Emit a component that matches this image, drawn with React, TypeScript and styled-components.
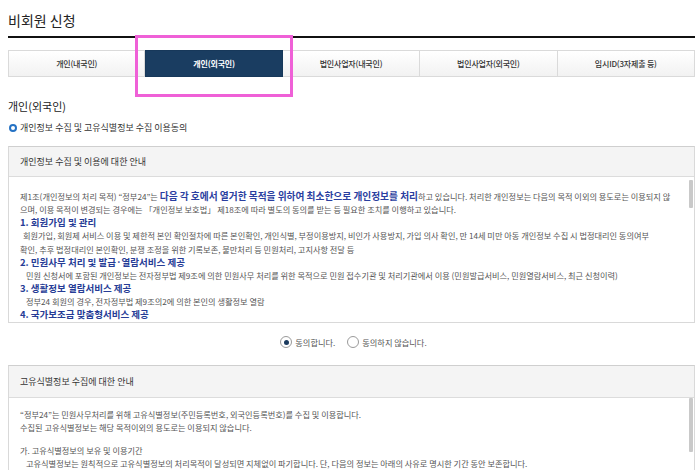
import React from "react";
import styled, { createGlobalStyle } from "styled-components";

const GlobalStyle = createGlobalStyle`
  html, body { margin: 0; padding: 0; background: #fff; }
  body { font-family: "Noto Sans CJK KR", "Noto Sans", sans-serif; overflow: hidden; }
`;

const Page = styled.div`
  position: relative;
  width: 687px;
  padding: 0 5px 0 8px;
  color: #333;
`;

const PageTitle = styled.h1`
  margin: 0;
  padding: 9px 0 5px;
  font-size: 14px;
  line-height: 22px;
  font-weight: 400;
  color: #222;
  border-bottom: 2px solid #111;
`;

const TabList = styled.div`
  display: grid;
  grid-template-columns: repeat(5, 1fr);
  margin-top: 12px;
  height: 27px;
`;

const Tab = styled.div<{ $active?: boolean }>`
  display: flex;
  align-items: center;
  justify-content: center;
  font-size: 8px;
  letter-spacing: -0.2px;
  border: 1px solid ${(p) => (p.$active ? "#17385a" : "#dadada")};
  border-left-width: ${(p) => (p.$active ? "1px" : "0")};
  background: ${(p) =>
    p.$active ? "#1a3d61" : "linear-gradient(#ffffff, #f2f2f2)"};
  color: ${(p) => (p.$active ? "#fff" : "#333")};
  font-weight: ${(p) => (p.$active ? 700 : 500)};
  &:first-child { border-left-width: 1px; }
`;

const SectionTitle = styled.h2`
  margin: 21px 0 0;
  font-size: 11px;
  line-height: 16px;
  font-weight: 400;
  color: #222;
`;

const AgreeTitle = styled.div`
  display: flex;
  align-items: center;
  gap: 3px;
  margin-top: 7px;
  font-size: 9px;
  line-height: 14px;
  color: #333;
`;

const RingIcon = styled.span`
  display: inline-block;
  box-sizing: border-box;
  width: 8px;
  height: 8px;
  border: 2px solid #2572c4;
  border-radius: 50%;
  margin-left: 1px;
`;

const InfoBox = styled.div<{ $gap: number }>`
  margin-top: ${(p) => p.$gap}px;
  border: 1px solid #d9d9d9;
  border-top-color: #cfcfcf;
`;

const InfoHead = styled.div<{ $h: number }>`
  display: flex;
  align-items: center;
  height: ${(p) => p.$h}px;
  padding-left: 11px;
  background: #f4f4f4;
  border-bottom: 1px solid #dcdcdc;
  font-size: 9px;
  color: #333;
`;

const InfoBody = styled.div<{ $h: number; $pt: number; $lh: number }>`
  position: relative;
  height: ${(p) => p.$h}px;
  box-sizing: border-box;
  padding: ${(p) => p.$pt}px 14px 0 11px;
  overflow: hidden;
  font-size: 8.2px;
  line-height: ${(p) => p.$lh}px;
  color: #555;
`;

const Line = styled.div<{ $indent?: number }>`
  white-space: nowrap;
  padding-left: ${(p) => p.$indent ?? 0}px;
`;

const Blank = styled.div`
  height: 10px;
`;

const Emph = styled.span`
  font-size: 9.7px;
  font-weight: 700;
  color: #2a3ea0;
`;

const ItemHead = styled.div`
  white-space: nowrap;
  font-size: 9.5px;
  font-weight: 700;
  color: #263c96;
`;

const ScrollThumb = styled.div<{ $top: number; $h: number }>`
  position: absolute;
  right: 1px;
  top: ${(p) => p.$top}px;
  width: 4px;
  height: ${(p) => p.$h}px;
  background: #c9c9c9;
  border-radius: 1px;
`;

const RadioRow = styled.div`
  display: flex;
  justify-content: center;
  align-items: center;
  gap: 12px;
  height: 38px;
  padding-left: 4px;
  font-size: 8.2px;
  color: #555;
`;

const RadioLabel = styled.label`
  display: flex;
  align-items: center;
  gap: 3px;
`;

const RadioCircle = styled.span<{ $checked?: boolean }>`
  position: relative;
  box-sizing: border-box;
  width: 12px;
  height: 12px;
  border: 1px solid #9a9a9a;
  border-radius: 50%;
  background: #fff;
  &::after {
    content: "";
    display: ${(p) => (p.$checked ? "block" : "none")};
    position: absolute;
    left: 2.5px;
    top: 2.5px;
    width: 5px;
    height: 5px;
    border-radius: 50%;
    background: #1b3a5e;
  }
`;

const Highlight = styled.div`
  position: absolute;
  left: 135px;
  top: 35px;
  width: 158px;
  height: 62px;
  box-sizing: border-box;
  border: 3px solid #ef60d7;
  pointer-events: none;
`;

const tabs = ["개인(내국인)", "개인(외국인)", "법인사업자(내국인)", "법인사업자(외국인)", "임시ID(3자제출 등)"];

export default function App() {
  return (
    <>
      <GlobalStyle />
      <Page>
        <PageTitle>비회원 신청</PageTitle>
        <TabList>
          {tabs.map((t, i) => (
            <Tab key={t} $active={i === 1}>
              {t}
            </Tab>
          ))}
        </TabList>

        <SectionTitle>개인(외국인)</SectionTitle>
        <AgreeTitle>
          <RingIcon />
          개인정보 수집 및 고유식별정보 수집 이용동의
        </AgreeTitle>

        <InfoBox $gap={11}>
          <InfoHead $h={29}>개인정보 수집 및 이용에 대한 안내</InfoHead>
          <InfoBody $h={145} $pt={13} $lh={13.15}>
            <Line>
              제1조(개인정보의 처리 목적) “정부24”는{" "}
              <Emph>다음 각 호에서 열거한 목적을 위하여 최소한으로 개인정보를 처리</Emph>하고 있습니다. 처리한
              개인정보는 다음의 목적 이외의 용도로는 이용되지 않
            </Line>
            <Line>
              으며, 이용 목적이 변경되는 경우에는 「개인정보 보호법」 제18조에 따라 별도의 동의를 받는 등 필요한
              조치를 이행하고 있습니다.
            </Line>
            <ItemHead>1. 회원가입 및 관리</ItemHead>
            <Line $indent={3}>
              회원가입, 회원제 서비스 이용 및 제한적 본인 확인절차에 따른 본인확인, 개인식별, 부정이용방지, 비인가
              사용방지, 가입 의사 확인, 만 14세 미만 아동 개인정보 수집 시 법정대리인 동의여부
            </Line>
            <Line>
              확인, 추후 법정대리인 본인확인, 분쟁 조정을 위한 기록보존, 불만처리 등 민원처리, 고지사항 전달 등
            </Line>
            <ItemHead>2. 민원사무 처리 및 발급·열람서비스 제공</ItemHead>
            <Line $indent={6}>
              민원 신청서에 포함된 개인정보는 전자정부법 제9조에 의한 민원사무 처리를 위한 목적으로 민원 접수기관 및
              처리기관에서 이용 (민원발급서비스, 민원열람서비스, 최근 신청이력)
            </Line>
            <ItemHead>3. 생활정보 열람서비스 제공</ItemHead>
            <Line $indent={6}>정부24 회원의 경우, 전자정부법 제9조의2에 의한 본인의 생활정보 열람</Line>
            <ItemHead>4. 국가보조금 맞춤형서비스 제공</ItemHead>
            <ScrollThumb $top={3} $h={28} />
          </InfoBody>
        </InfoBox>

        <RadioRow>
          <RadioLabel>
            <RadioCircle $checked />
            동의합니다.
          </RadioLabel>
          <RadioLabel>
            <RadioCircle />
            동의하지 않습니다.
          </RadioLabel>
        </RadioRow>

        <InfoBox $gap={4}>
          <InfoHead $h={31}>고유식별정보 수집에 대한 안내</InfoHead>
          <InfoBody $h={140} $pt={9.5} $lh={13.3}>
            <Line>
              “정부24”는 민원사무처리를 위해 고유식별정보(주민등록번호, 외국인등록번호)를 수집 및 이용합니다.
            </Line>
            <Line>수집된 고유식별정보는 해당 목적이외의 용도로는 이용되지 않습니다.</Line>
            <Blank />
            <Line>가. 고유식별정보의 보유 및 이용기간</Line>
            <Line $indent={6}>
              고유식별정보는 원칙적으로 고유식별정보의 처리목적이 달성되면 지체없이 파기합니다. 단, 다음의 정보는
              아래의 사유로 명시한 기간 동안 보존합니다.
            </Line>
            <ScrollThumb $top={0} $h={54} />
          </InfoBody>
        </InfoBox>

        <Highlight />
      </Page>
    </>
  );
}
